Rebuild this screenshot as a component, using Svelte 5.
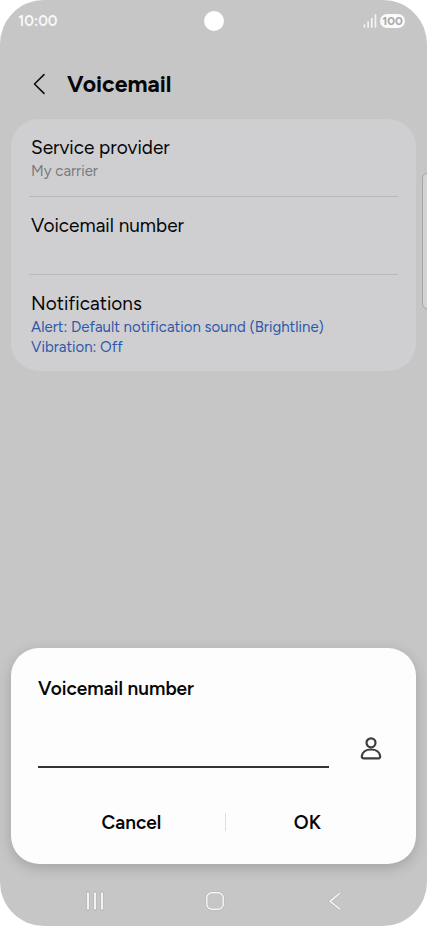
<script>
  let number = $state('');
</script>

<div class="screen">
  <div class="status">
    <time>10:00</time>
    <span class="camera"></span>
    <div class="indicators">
      <svg width="14" height="14" viewBox="0 0 14 14" aria-hidden="true">
        <path d="M1.4 13V11M5.1 13V8M8.800 13V4.500M12.500 13V1" stroke="#f4f4f4" stroke-width="1.700" stroke-linecap="round" />
      </svg>
      <span class="battery">100</span>
    </div>
  </div>

  <header>
    <button class="back" aria-label="Back">
      <svg width="14" height="22" viewBox="0 0 14 22" fill="none" aria-hidden="true">
        <path d="M12 1.600 2.500 11l9.500 9.400" stroke="#111" stroke-width="1.600" stroke-linecap="round" stroke-linejoin="round" />
      </svg>
    </button>
    <h1>Voicemail</h1>
  </header>

  <main>
    <button class="row">
      <span class="label">Service provider</span>
      <span class="sub">My carrier</span>
    </button>
    <button class="row">
      <span class="label">Voicemail number</span>
    </button>
    <button class="row">
      <span class="label">Notifications</span>
      <span class="sub accent">Alert: Default notification sound (Brightline)</span>
      <span class="sub accent">Vibration: Off</span>
    </button>
  </main>

  <span class="edge"></span>

  <section class="dialog" role="dialog" aria-labelledby="dialog-title">
    <h2 id="dialog-title"><label for="number">Voicemail number</label></h2>
    <div class="entry">
      <input id="number" type="tel" bind:value={number} />
      <button class="contact" aria-label="Choose contact">
        <svg width="22" height="24" viewBox="0 0 22 24" fill="none" stroke="#3d3d41" stroke-width="2.200" aria-hidden="true">
          <circle cx="11" cy="5.800" r="4.500" />
          <path d="M3.600 21.400h14.800c1.200 0 1.900-.8 1.800-2C19.800 15.400 16.200 12.500 11 12.500S2.200 15.400 1.800 19.400c-.1 1.200.6 2 1.800 2Z" stroke-linejoin="round" />
        </svg>
      </button>
    </div>
    <div class="actions">
      <button>Cancel</button>
      <span class="separator"></span>
      <button>OK</button>
    </div>
  </section>

  <nav>
    <button aria-label="Recent apps">
      <svg width="20" height="20" viewBox="0 0 20 20" aria-hidden="true">
        <path d="M3 1.500V18.500M10 1.500V18.500M17 1.500V18.500" stroke="#b3b3b3" stroke-width="3" stroke-linecap="round" />
        <path d="M3 1.500V18.500M10 1.500V18.500M17 1.500V18.500" stroke="#f6f6f6" stroke-width="1.900" />
      </svg>
    </button>
    <button aria-label="Home">
      <svg width="20" height="20" viewBox="0 0 20 20" fill="none" aria-hidden="true">
        <rect x="1.800" y="1.800" width="16.400" height="16.400" rx="5" stroke="#b3b3b3" stroke-width="2.600" />
        <rect x="1.800" y="1.800" width="16.400" height="16.400" rx="5" stroke="#f8f8f8" stroke-width="1.500" />
      </svg>
    </button>
    <button aria-label="Back">
      <svg width="20" height="20" viewBox="0 0 20 20" fill="none" aria-hidden="true">
        <path d="M15 2 5 10.300 15 18.200" stroke="#b3b3b3" stroke-width="2.600" />
        <path d="M15 2 5 10.300 15 18.200" stroke="#f8f8f8" stroke-width="1.500" />
      </svg>
    </button>
  </nav>
</div>

<style>
  :global(body) {
    margin: 0;
    background: #fff;
  }

  .screen {
    position: relative;
    display: flex;
    flex-direction: column;
    box-sizing: border-box;
    min-height: 100vh;
    overflow: hidden;
    border-radius: 44px;
    background: #c6c6c6;
    color: #060608;
    font-family: Figtree, Roboto, "Liberation Sans", sans-serif;
  }

  button {
    margin: 0;
    padding: 0;
    border: 0;
    background: none;
    color: inherit;
    font: inherit;
    cursor: pointer;
  }

  svg {
    display: block;
  }

  .status {
    display: grid;
    grid-template-columns: 1fr auto 1fr;
    align-items: center;
    height: 42px;
    padding: 0 18px;
    color: #fafafa;
    font-size: 15px;
    font-weight: 600;
  }

  .camera {
    width: 20px;
    height: 20px;
    border-radius: 50%;
    background: #fff;
  }

  .indicators {
    display: flex;
    align-items: center;
    justify-content: flex-end;
    gap: 3px;
    padding-right: 4px;
  }

  .battery {
    width: 25px;
    height: 14px;
    border-radius: 7px;
    background: #fafafa;
    color: #a8a8a8;
    font-size: 12px;
    font-weight: 700;
    line-height: 14px;
    text-align: center;
  }

  header {
    display: flex;
    align-items: center;
    gap: 21px;
    height: 77px;
    padding: 6px 32px 0;
    box-sizing: border-box;
  }

  h1 {
    margin: 0;
    font-size: 23px;
    font-weight: 700;
    line-height: 32px;
  }

  main {
    margin: 0 11px;
    padding: 0 18px;
    border-radius: 28px;
    background: #cfcfd1;
  }

  .row {
    display: flex;
    flex-direction: column;
    align-items: flex-start;
    box-sizing: border-box;
    width: 100%;
    min-height: 78px;
    padding: 16px 2px 14px;
    border-bottom: 1px solid #b9b9bb;
    text-align: left;
  }

  .row:last-child {
    border-bottom: 0;
  }

  .label {
    font-size: 19px;
    line-height: 26px;
  }

  .sub {
    color: #7b7b7d;
    font-size: 15px;
    line-height: 20px;
  }

  .accent {
    color: #2f58ab;
  }

  .edge {
    position: absolute;
    top: 173px;
    right: -5px;
    width: 8px;
    height: 134px;
    border: 1px solid #a5a5a5;
    border-radius: 5px;
    background: #d3d3d3;
  }

  .dialog {
    margin: auto 11px 0;
    padding: 28px 27px 21px;
    border-radius: 28px;
    background: #fdfdfe;
    box-shadow: 0 4px 14px rgb(0 0 0 / 18%);
  }

  h2 {
    margin: 0;
    font-size: 19px;
    font-weight: 600;
    line-height: 26px;
  }

  .entry {
    display: flex;
    align-items: center;
    gap: 31px;
    padding-right: 7px;
  }

  input {
    flex: 1;
    min-width: 0;
    height: 66px;
    box-sizing: border-box;
    padding: 24px 0 0;
    border: 0;
    border-bottom: 2px solid #343438;
    border-radius: 0;
    outline: 0;
    background: none;
    font: inherit;
    font-size: 19px;
  }

  .contact {
    padding-top: 28px;
  }

  .actions {
    display: flex;
    align-items: center;
    padding-top: 33px;
  }

  .actions button {
    flex: 7;
    height: 42px;
    font-size: 19px;
    font-weight: 600;
  }

  .actions button:first-child {
    flex: 8;
  }

  .separator {
    width: 1px;
    height: 18px;
    background: #dedee0;
  }

  nav {
    display: flex;
    justify-content: center;
    gap: 100px;
    padding: 27px 0 15px 3px;
  }
</style>
